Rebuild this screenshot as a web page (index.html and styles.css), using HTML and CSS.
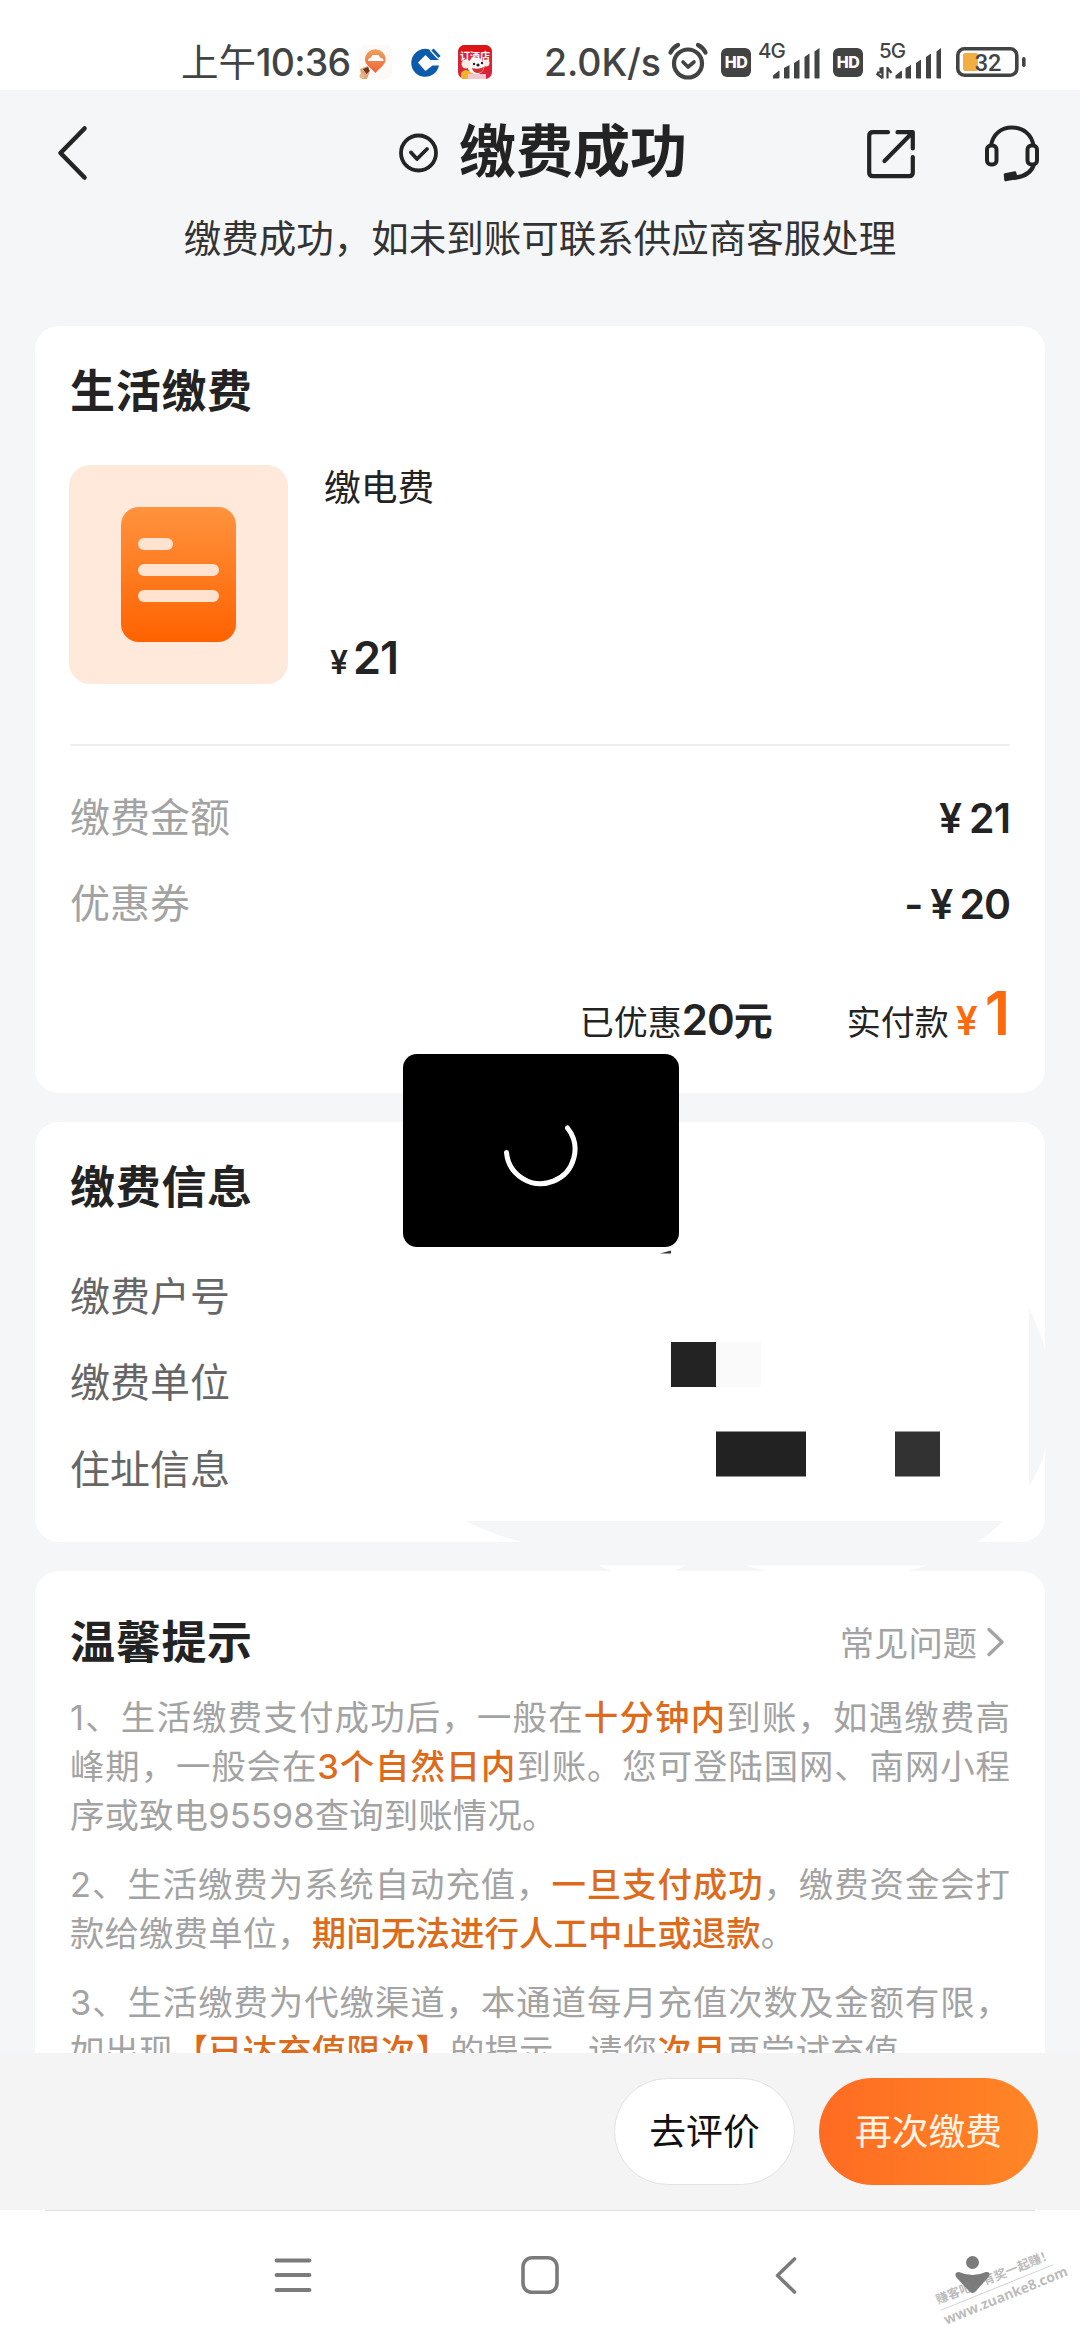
FILE: index.html
```html
<!DOCTYPE html>
<html lang="zh-CN">
<head>
<meta charset="utf-8">
<title>缴费成功</title>
<link rel="stylesheet" href="styles.css">
</head>
<body>
<div class="screen">
  <div class="status">
    <span class="time"><span class="ampm">上午</span>10:36</span>
    <svg class="ic-pin" width="34" height="34" viewBox="0 0 34 34">
      <rect x="1" y="0" width="33" height="34" rx="7" fill="#fdf9f6"/>
      <defs><linearGradient id="pin" x1="0" y1="0" x2="0" y2="1"><stop offset="0" stop-color="#efa05c"/><stop offset="1" stop-color="#ee6438"/></linearGradient></defs>
      <path d="M17.500 28C13 23 7 20 7 14.500a10.300 10.300 0 0 1 20.600 0C27.600 20 21.500 23 17.500 28Z" fill="url(#pin)"/>
      <path d="M10 16q0-3 2.500-3l2-3h6l2 3q3 0 3 3z" fill="#fff"/>
      <path d="M2 24l8-3 2 5-3 8H4z" fill="#dfa877"/><path d="M5 24l5-2 1.500 4-3 3z" fill="#6d3428"/>
      <circle cx="4" cy="31" r="2.500" fill="#edb48a"/>
    </svg>
    <svg class="ic-bank" width="30" height="30" viewBox="0 0 30 30">
      <path d="M18 2.300A14 14 0 1 0 28 18.500H21.500L14.500 24 7 15.500 14.500 8l5 5H28L18 2.300Z" fill="#0d5bab"/>
      <path d="M14.500 9l7 7-7 7-7-7z" fill="#fff"/>
      <path d="M21 1.800l7.500 8" stroke="#fff" stroke-width="6"/>
      <path d="M21.500 2.500l7 7.500" stroke="#0d5bab" stroke-width="3"/>
    </svg>
    <svg class="ic-hotel" width="34" height="34" viewBox="0 0 34 34">
      <defs><clipPath id="hc"><rect width="34" height="34" rx="7"/></clipPath></defs>
      <g clip-path="url(#hc)">
        <rect width="34" height="34" fill="#d92336"/><rect width="34" height="7" fill="#dc1515"/>
        <path d="M3 28q4-6 11 0v6H3z" fill="#f1b52c"/>
        <circle cx="18" cy="21" r="8.500" fill="#fff8f6"/><circle cx="8" cy="19" r="4.500" fill="#fbe9e6"/><circle cx="28" cy="18" r="3.500" fill="#fbe9e6"/>
        <path d="M10 29h18v5H10z" fill="#f4c6cc"/>
        <path d="M14 23q6 2 12-1-1 6-6 6t-6-5z" fill="#d33036"/>
        <circle cx="16" cy="19" r="1.200" fill="#222"/><circle cx="24" cy="18" r="1.200" fill="#222"/><circle cx="20" cy="20" r="1.600" fill="#222"/>
        <text x="17" y="14.500" text-anchor="middle" class="hotel-text">订酒店</text>
      </g>
    </svg>
    <span class="speed">2.0K/s</span>
    <svg class="ic-alarm" width="40" height="38" viewBox="0 0 40 38" fill="none" stroke="#424343">
      <circle cx="20" cy="20.500" r="14" stroke-width="4.200"/>
      <path d="M15 19l5 5 6-5" stroke-width="3.600" stroke-linecap="round" stroke-linejoin="round"/>
      <path d="M2.500 9.500Q5 4.500 10 2M37.500 9.500Q35 4.500 30 2" stroke-width="4.200" stroke-linecap="round"/>
    </svg>
    <span class="hd">HD</span>
    <svg class="ic-sig1" width="66" height="38" viewBox="0 0 66 38" fill="#424343">
      <text x="1" y="16.500" class="net">4G</text>
      <path d="M16 37.500v-3l5.500-4.500q1-.6 1 .6v5.400q0 1.500-1.500 1.500z"/>
      <path d="M27 27l5.500-3V37q0 .6-1 .6H28q-1 0-1-.8zM37 22l5.500-3.500V37q0 .6-1 .6H38q-1 0-1-.8zM47.500 16l5-3.500V37q0 .6-1 .6h-3q-1 0-1-.8zM57.500 10.500l5-3.500V37q0 .6-1 .6h-3q-1 0-1-.8z"/>
    </svg>
    <span class="hd hd2">HD</span>
    <svg class="ic-sig2" width="66" height="38" viewBox="0 0 66 38" fill="#424343">
      <text x="1" y="16.500" class="net">5G</text>
      <path d="M-1 31.500l3.500 0V26.500M4.500 26v11.500M-1.500 32.500l6 4.500M9.500 26v11.500M9.500 27l4 5" fill="none" stroke="#424343" stroke-width="2.200"/>
      <path d="M17.500 37.500v-3l5.500-4.500q1-.6 1 .6v5.400q0 1.500-1.500 1.500z"/>
      <path d="M27.500 27l5.500-3V37q0 .6-1 .6H28.500q-1 0-1-.8zM38 22l5-3.500V37q0 .6-1 .6h-3q-1 0-1-.8zM48 16l5-3.500V37q0 .6-1 .6h-3q-1 0-1-.8zM58.500 10.500l4.500-3.500V37q0 .6-1 .6h-2.500q-1 0-1-.8z"/>
    </svg>
    <svg class="ic-bat" width="70" height="30" viewBox="0 0 70 30">
      <rect x="1.800" y="1.800" width="59" height="26.400" rx="6.500" fill="none" stroke="#424343" stroke-width="3.600"/>
      <rect x="66" y="10" width="3.600" height="10" rx="1.800" fill="#424343"/>
      <rect x="7" y="6" width="15" height="18" rx="2" fill="#f2ae42"/>
      <text x="32" y="23.800" text-anchor="middle" class="bat">32</text>
    </svg>
  </div>

  <header class="header">
    <div class="titlebar">
      <svg class="back" width="34" height="60" viewBox="0 0 34 60" fill="none" stroke="#232424" stroke-width="4.600" stroke-linecap="round" stroke-linejoin="round"><path d="M29.500 5.500L5.500 30 29.500 54.500"/></svg>
      <div class="headline">
        <svg width="40" height="40" viewBox="0 0 40 40" fill="none" stroke="#232424" stroke-width="3.800" stroke-linecap="round" stroke-linejoin="round"><circle cx="20.500" cy="20" r="17.500"/><path d="M13 19.500l6 6.500 10-10"/></svg>
        <h1>缴费成功</h1>
      </div>
      <svg class="share" width="50" height="50" viewBox="0 0 50 50" fill="none" stroke="#232424" stroke-width="4.200" stroke-linecap="round" stroke-linejoin="round"><path d="M22 3.200H7Q3.200 3.200 3.200 7V43.500Q3.200 47.200 7 47.200H43Q46.800 47.200 46.800 43.500V28M31.500 3.200H46.800V19.500M46 4L18.500 32"/></svg>
      <svg class="headset" width="56" height="58" viewBox="0 0 56 58" fill="none" stroke="#232424" stroke-width="4" stroke-linejoin="round"><rect x="3" y="21.500" width="9.500" height="19" rx="4"/><rect x="43.500" y="21.500" width="9.500" height="19" rx="4"/><path d="M7 21.500C9 10 17 3.500 28 3.500S47.500 10 49.500 21.500M50 40.500Q46 52.500 29 54"/><path d="M21 50.500l10-2 1.500 5.500-11 2z" fill="#232424" stroke-width="2.500"/></svg>
    </div>
    <p class="subtitle">缴费成功，如未到账可联系供应商客服处理</p>
  </header>

  <main class="cards">
    <section class="card order">
      <h2>生活缴费</h2>
      <div class="item">
        <svg class="tile" width="219" height="219" viewBox="0 0 219 219">
          <defs><linearGradient id="doc" x1="0" y1="0" x2="0" y2="1"><stop offset="0" stop-color="#ff933e"/><stop offset="1" stop-color="#ff6200"/></linearGradient></defs>
          <rect width="219" height="219" rx="21" fill="#fee9db"/>
          <rect x="52" y="42" width="115" height="135" rx="18" fill="url(#doc)"/>
          <g fill="#ffe2d0"><rect x="69" y="73" width="35" height="12" rx="6"/><rect x="69" y="99" width="81" height="12" rx="6"/><rect x="69" y="125" width="81" height="12" rx="6"/></g>
        </svg>
        <div class="item-text">
          <span class="name">缴电费</span>
          <span class="price"><i>¥</i>21</span>
        </div>
      </div>
      <div class="row first"><span>缴费金额</span><b>¥<em>21</em></b></div>
      <div class="row"><span>优惠券</span><b>-<em class="yen">¥</em><em>20</em></b></div>
      <div class="sum">
        <span class="saved">已优惠<b>20</b><strong>元</strong></span>
        <span class="paid">实付款<i>¥</i><b>1</b></span>
      </div>
    </section>

    <section class="card info">
      <h2>缴费信息</h2>
      <div class="row"><span>缴费户号</span></div>
      <div class="row"><span>缴费单位</span></div>
      <div class="row"><span>住址信息</span></div>
    </section>

    <section class="card tips">
      <div class="tips-head">
        <h2>温馨提示</h2>
        <a class="faq">常见问题<svg width="22" height="32" viewBox="0 0 22 32" fill="none" stroke="#a3a3a3" stroke-width="3.400" stroke-linecap="round" stroke-linejoin="round"><path d="M4 3.500L17 16 4 28.500"/></svg></a>
      </div>
      <p>
        <span class="line">1、生活缴费支付成功后，一般在<mark>十分钟内</mark>到账，如遇缴费高</span>
        <span class="line">峰期，一般会在<mark>3个自然日内</mark>到账。您可登陆国网、南网小程</span>
        <span class="line last">序或致电<span class="num">95598</span>查询到账情况。</span>
      </p>
      <p>
        <span class="line">2、生活缴费为系统自动充值，<mark>一旦支付成功</mark>，缴费资金会打</span>
        <span class="line last">款给缴费单位，<mark>期间无法进行人工中止或退款</mark>。</span>
      </p>
      <p>
        <span class="line">3、生活缴费为代缴渠道，本通道每月充值次数及金额有限，</span>
        <span class="line last">如出现<mark>【已达充值限次】</mark>的提示，请您<mark>次月</mark>再尝试充值。</span>
      </p>
    </section>
  </main>

  <footer class="actions">
    <button class="btn light">去评价</button>
    <button class="btn primary">再次缴费</button>
  </footer>

  <nav class="nav">
    <svg width="40" height="40" viewBox="0 0 40 40" stroke="#7b7b7b" stroke-width="3.800" stroke-linecap="round"><path d="M3.500 5.500h33M3.500 20h33M3.500 35h33"/></svg>
    <svg width="40" height="40" viewBox="0 0 40 40" fill="none" stroke="#7b7b7b" stroke-width="3.600"><rect x="3" y="2.800" width="34" height="34.500" rx="9"/></svg>
    <svg width="40" height="40" viewBox="0 0 40 40" fill="none" stroke="#7b7b7b" stroke-width="3.600" stroke-linecap="round" stroke-linejoin="round"><path d="M27.500 4L10.500 20.500 27.500 37"/></svg>
  </nav>

  <svg class="redaction" width="700" height="340" viewBox="380 1240 700 340">
    <path d="M660 1253.500l11-3v3z" fill="#333"/>
    <rect x="671" y="1342" width="45" height="45" fill="#232323"/>
    <rect x="716" y="1342" width="45" height="45" fill="#fafafa"/>
    <rect x="716" y="1431.500" width="90" height="45" fill="#222"/>
    <rect x="895" y="1431.500" width="45" height="45" fill="#323232"/>
    <path d="M1029 1308q14 30 17 46v92q-5 22-17 40z" fill="#f5f6f8"/>
    <path d="M465 1521H1003q-14 14-27 22H525q-34-9-60-22z" fill="#f5f6f8"/>
    <path d="M598 1565.500h88l-13 6h-60zM745 1565.500h183l-22 6H768z" fill="#fff"/>
  </svg>

  <div class="loading">
    <svg width="80" height="80" viewBox="0 0 80 80" fill="none" stroke="#fff" stroke-width="5" stroke-linecap="round"><path d="M5.500 41.500A34.300 34.300 0 1 0 66.500 17"/></svg>
  </div>

  <svg class="person" width="36" height="40" viewBox="0 0 36 40" fill="#7b7b7b"><circle cx="18.500" cy="7.500" r="6.500"/><path d="M5 17q13.500 6 27 0 4.500-.5 3.300 4L22 36q-3.500 4-7 0L2 22Q0 17 5 17z"/></svg>
  <div class="watermark"><span class="wm-a">赚客吧，有奖一起赚！</span><span class="wm-b">www.zuanke8.com</span></div>
</div>
</body>
</html>
```
FILE: styles.css
```css
* { box-sizing: border-box; margin: 0; padding: 0; }
i, em { font-style: normal; }
body { width: 1080px; height: 2340px; overflow: hidden; background: #f5f6f8; color: #232323; font-family: "Inter", "Noto Sans CJK SC", sans-serif; }
.screen { position: relative; width: 1080px; height: 2340px; overflow: hidden; display: flex; flex-direction: column; }
svg { display: block; flex: none; overflow: visible; }

.status { height: 90px; flex: none; background: #fff; display: flex; align-items: center; padding: 34px 0 0 181px; color: #424343; white-space: nowrap; }
.time, .speed { font-size: 37.500px; font-weight: 500; line-height: 56px; letter-spacing: -.8px; margin-top: 2px; }
.time { width: 177px; }
.ampm { font-size: 37.500px; letter-spacing: 0; font-weight: 400; }
.ic-bank { margin-left: 19px; }
.ic-hotel { margin-left: 17px; }
.speed { margin-left: 52px; width: 124px; letter-spacing: -.1px; }
.hotel-text { font: 700 10px "Noto Sans CJK SC", sans-serif; fill: #fff; }
.hd { width: 30px; height: 29px; border-radius: 6px; background: #424343; color: #fff; font-size: 16px; font-weight: 800; line-height: 29px; text-align: center; letter-spacing: -.5px; margin-left: 13px; }
.ic-sig1 { margin-left: 6px; margin-top: -4px; }
.hd2 { margin-left: 10px; }
.ic-sig2 { margin-left: 15px; margin-top: -4px; }
.net { font: 500 20.500px "Inter", sans-serif; letter-spacing: -1px; }
.ic-bat { margin-left: 12px; }
.bat { font: 500 23.500px "Roboto", sans-serif; fill: #424343; }

.header { height: 236px; flex: none; }
.titlebar { height: 126px; display: flex; align-items: center; padding-left: 55px; }
.headline { display: flex; align-items: center; margin-left: 309px; gap: 21px; }
h1 { font-size: 57px; line-height: 80px; font-weight: 700; white-space: nowrap; width: 228px; margin-top: -2px; }
.share { margin-left: 179px; margin-top: 1px; }
.headset { margin-left: 68px; }
.subtitle { font-size: 37.500px; line-height: 56px; text-align: center; color: #333; margin-top: -5px; }

.cards { height: 1727px; flex: none; overflow: hidden; display: flex; flex-direction: column; gap: 29px; padding: 0 35px; }
.card { background: #fff; border-radius: 24px; padding: 0 35px; flex: none; }
h2 { font-size: 45px; line-height: 60px; font-weight: 600; letter-spacing: .7px; position: relative; top: 3px; }
.order { height: 767px; padding-top: 33px; }
.item { display: flex; gap: 36px; margin-top: 46px; padding-bottom: 60px; border-bottom: 2px solid #eee; }
.tile { margin-left: -1px; }
.item-text { display: flex; flex-direction: column; justify-content: space-between; height: 225px; margin-bottom: -6px; }
.name { font-size: 36.800px; line-height: 46px; }
.price { font-size: 45px; font-weight: 600; line-height: 54px; padding-left: 6px; letter-spacing: -1px; }
.price i { font-size: 32px; margin-right: 6px; }
.row { height: 86.500px; display: flex; align-items: center; justify-content: space-between; font-size: 40px; }
.row span { margin-top: -3px; }
.order .row span { color: #a3a3a3; }
.row b { font-size: 41px; font-weight: 600; margin-top: 3px; }
.row em { margin-left: 7px; letter-spacing: -1px; }
.row.first { margin-top: 27px; }
.sum { display: flex; justify-content: flex-end; align-items: baseline; font-size: 34px; gap: 74px; height: 100px; line-height: 100px; margin-top: 17px; white-space: nowrap; }
.saved b { font-size: 42px; font-weight: 600; letter-spacing: -1px; }
.saved strong { font-size: 39px; font-weight: 700; }
.paid i { font-size: 39px; font-weight: 600; color: #fb6a0c; margin-left: 7px; }
.paid b { font-size: 60px; font-weight: 600; color: #fb6a0c; margin-left: 7px; }

.info { height: 420px; padding-top: 33px; }
.info h2 { margin-bottom: 37px; }
.info .row span { color: #666; }

.tips { height: 520px; padding-top: 39px; }
.tips-head { display: flex; justify-content: space-between; align-items: center; height: 60px; margin-bottom: 23px; }
.faq { display: flex; align-items: center; gap: 8px; font-size: 34.300px; color: #a3a3a3; padding-right: 3px; padding-top: 2px; }
.faq svg { margin-top: 2px; }
.tips p { color: #a3a3a3; font-size: 34.400px; line-height: 49.200px; margin-bottom: 19.500px; }
.line { display: block; white-space: nowrap; text-align: justify; text-align-last: justify; }
.line.last { text-align-last: left; letter-spacing: .15px; }
mark { background: none; color: #dd6b1c; font-weight: 500; }

.actions { height: 157px; flex: none; background: #f4f4f4; display: flex; justify-content: flex-end; align-items: flex-start; gap: 24px; padding: 25px 42px 0 0; z-index: 1; }
.btn { height: 107px; border: 0; border-radius: 54px; font-family: inherit; font-size: 36.800px; line-height: 103px; text-align: center; white-space: nowrap; }
.light { width: 181px; background: #fff; border: 1px solid #e2e2e2; color: #111; }
.primary { width: 219px; color: #fff5e6; background: linear-gradient(90deg, #ff6b22, #ff8626); }

.nav { flex: 1; background: linear-gradient(#e0e0e0, #e0e0e0) 45px 0 / 990px 1px no-repeat #fff; display: flex; justify-content: center; gap: 207px; padding-top: 45px; }

.redaction { position: absolute; left: 380px; top: 1240px; }
.loading { position: absolute; left: 403px; top: 1054px; width: 276px; height: 193px; border-radius: 14px; background: #000; display: flex; align-items: center; justify-content: center; }
.person { position: absolute; left: 954px; top: 2255px; }
.watermark { position: absolute; left: 936px; top: 2265px; width: 122px; height: 45px; color: rgba(130,130,130,.55); transform: rotate(-22deg); font-family: "Noto Sans CJK SC", sans-serif; font-weight: 700; white-space: nowrap; }
.watermark span { display: block; }
.wm-a { font-size: 12.500px; line-height: 22px; border-bottom: 1px solid rgba(140,140,140,.4); }
.wm-b { font-family: "Open Sans", sans-serif; font-size: 14px; line-height: 20px; }
```
